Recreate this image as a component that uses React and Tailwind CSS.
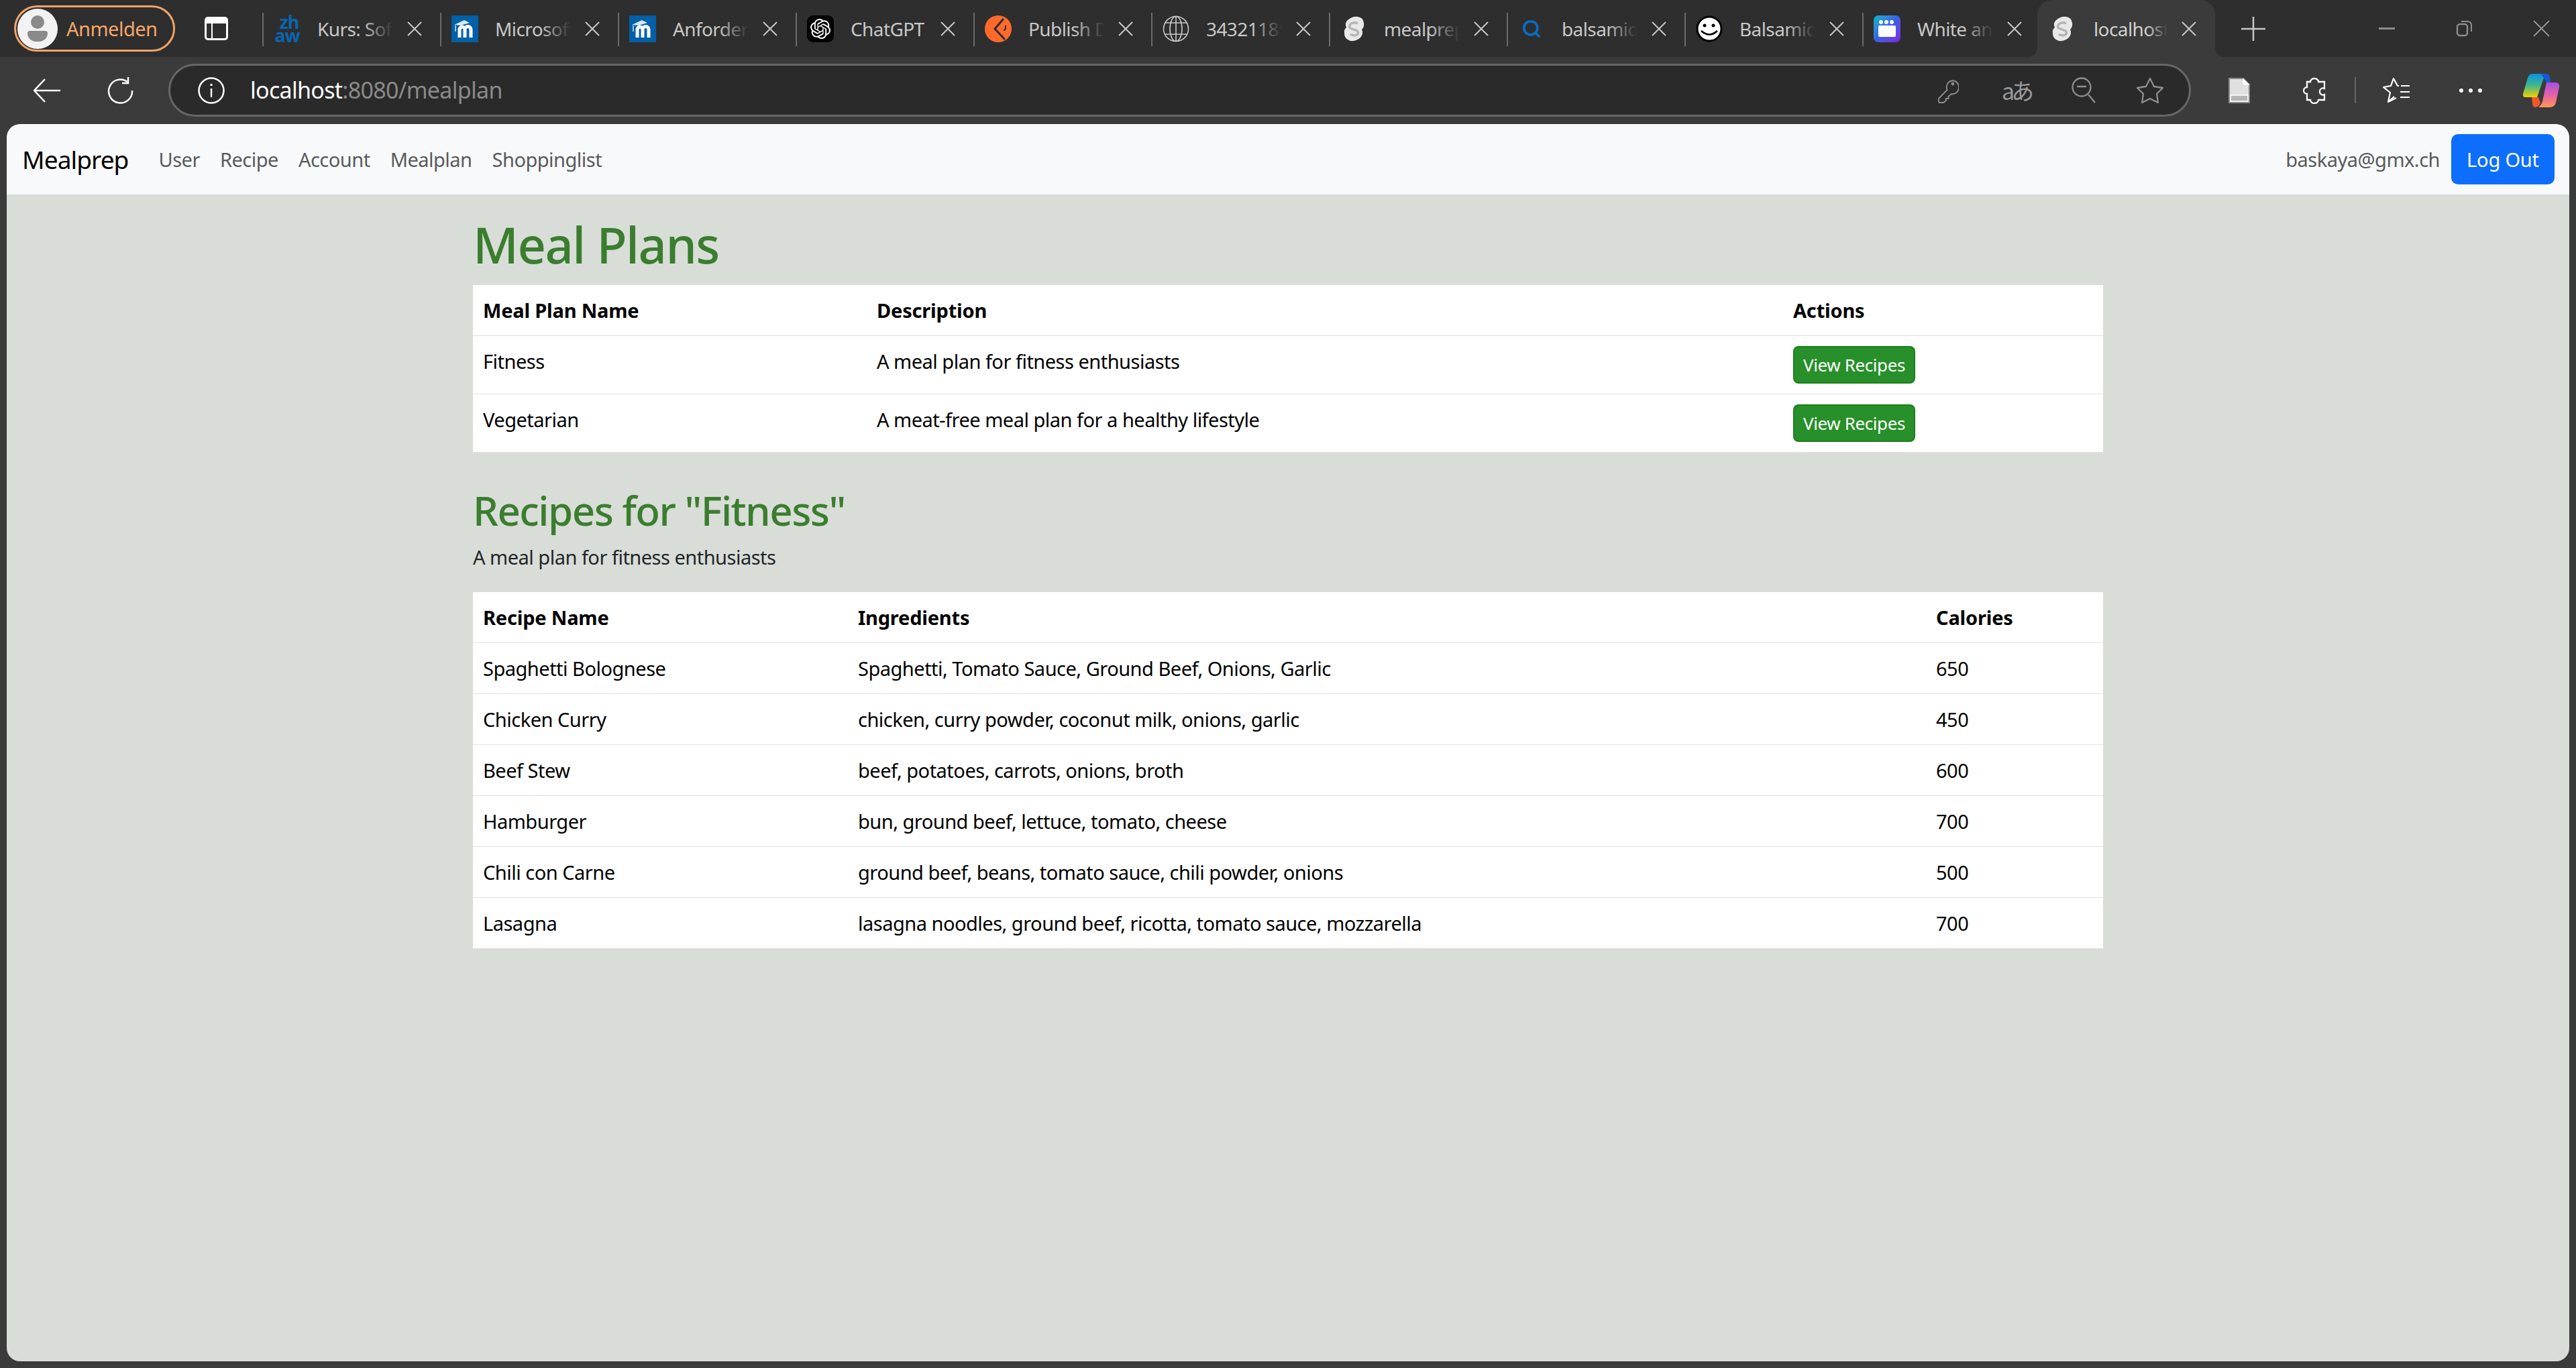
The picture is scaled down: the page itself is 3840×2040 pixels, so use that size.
import { Search } from 'lucide-react'
import { SiOpenai } from 'react-icons/si'

const ZhawIcon = () => (
  <div className="w-[40px] h-[40px] flex flex-col items-center justify-center text-[#0a66ae] font-bold text-[27px] leading-[20px] tracking-[-1px]">
    <span className="pl-[6px]">zh</span>
    <span>aw</span>
  </div>
)

const MoodleIcon = () => (
  <svg width="40" height="40" viewBox="0 0 40 40">
    <rect width="40" height="40" fill="#0060a8" />
    <path d="M4 14 L19 7 L27 11 L14 15 Z" fill="#fff" opacity="0.85" />
    <path d="M12 33 V19 M20 33 V21 a4.5 4.5 0 0 1 9 0 V33 M20 21 a4 4 0 0 0 -8 0" stroke="#fff" strokeWidth="5" fill="none" />
    <path d="M6 15 V24" stroke="#9cc4e4" strokeWidth="2" />
  </svg>
)

const GptIcon = () => (
  <div className="w-[40px] h-[40px] rounded-[9px] bg-black flex items-center justify-center">
    <SiOpenai size={30} color="#fff" />
  </div>
)

const PublishIcon = () => (
  <svg width="40" height="40" viewBox="0 0 40 40">
    <circle cx="20" cy="20" r="20" fill="#ff6a2c" />
    <path d="M28 5 L15 20 L30 36" stroke="#2e2e2e" strokeWidth="3" fill="none" />
    <path d="M31 15 V19 Q31 22 28 22" stroke="#2e2e2e" strokeWidth="2" fill="none" />
  </svg>
)

const GlobeIcon = () => (
  <svg width="40" height="40" viewBox="0 0 40 40" fill="none" stroke="#c8c8c8" strokeWidth="1.6">
    <circle cx="20" cy="20" r="18.5" />
    <ellipse cx="20" cy="20" rx="9" ry="18.5" />
    <path d="M20 1.5 V38.5 M4 11 H36 M4 28 H36" />
  </svg>
)

const SvelteIcon = () => (
  <svg width="40" height="40" viewBox="0 0 40 40">
    <path d="M26 2 Q34 3 35 11 Q36 17 32 21 Q35 27 30 33 Q24 39 15 38 Q6 35 6 27 Q5 21 9 18 Q6 11 11 7 Q18 1 26 2 Z" fill="#e8e8e8" />
    <path d="M26 12 Q20 9 15 13 Q12 17 15 19 L25 23 Q28 26 25 29 Q20 31 15 28" stroke="#b4b4b4" strokeWidth="3.5" fill="none" />
  </svg>
)

const SearchIcon = () => (
  <div className="w-[40px] h-[40px] flex items-center justify-center">
    <Search size={30} strokeWidth={3} color="#0a6cc4" />
  </div>
)

const SmileIcon = () => (
  <svg width="40" height="40" viewBox="0 0 40 40">
    <circle cx="20" cy="20" r="18" fill="#fff" stroke="#000" strokeWidth="3" />
    <circle cx="13" cy="15" r="2.5" fill="#000" />
    <circle cx="26" cy="15" r="2.5" fill="#000" />
    <path d="M8 23 Q20 34 32 23" stroke="#000" strokeWidth="2.5" fill="none" />
  </svg>
)

const WindowIcon = () => (
  <div className="w-[40px] h-[40px] rounded-[7px] bg-linear-to-br from-[#0fb5c9] via-[#3a5fe0] to-[#7a1ee6] flex flex-col px-[7px] pt-[7px]">
    <div className="flex gap-[2px] h-[6px] ml-[1px]">
      <div className="w-[6px] h-[6px] rounded-full bg-white" />
      <div className="w-[6px] h-[6px] rounded-full bg-white" />
      <div className="w-[6px] h-[6px] rounded-full bg-white" />
    </div>
    <div className="mt-[2px] h-[17px] rounded-[2px] bg-white" />
  </div>
)

const tabs = [
  { title: 'Kurs: Software', Icon: ZhawIcon },
  { title: 'Microsoft', Icon: MoodleIcon },
  { title: 'Anforderungen', Icon: MoodleIcon },
  { title: 'ChatGPT', Icon: GptIcon, noFade: true },
  { title: 'Publish Docs', Icon: PublishIcon },
  { title: '34321189', Icon: GlobeIcon },
  { title: 'mealprep', Icon: SvelteIcon },
  { title: 'balsamiq', Icon: SearchIcon },
  { title: 'Balsamiq', Icon: SmileIcon },
  { title: 'White and', Icon: WindowIcon },
]

const CloseX = ({ size = 22, color = '#c8c8c8', width = 2 }) => (
  <svg width={size} height={size} viewBox="0 0 22 22" className="shrink-0">
    <path d="M1 1 L21 21 M21 1 L1 21" stroke={color} strokeWidth={width} fill="none" />
  </svg>
)

const Tab = ({ title, Icon, noFade }) => (
  <div className="relative w-[265px] h-[85px] shrink-0 flex items-center">
    <div className="absolute left-0 top-[19px] w-[2px] h-[50px] bg-[#6b6b6b]" />
    <div className="ml-[17px] shrink-0"><Icon /></div>
    <div className="relative ml-[25px] w-[113px] h-[40px] overflow-hidden whitespace-nowrap text-[28px] leading-[40px] tracking-[-0.6px] text-[#c8c8c8]">
      {title}
      {!noFade && <div className="absolute right-0 top-0 w-[45px] h-[40px] bg-linear-to-r from-transparent to-[#2e2e2e]" />}
    </div>
    <div className="ml-[21px]"><CloseX /></div>
  </div>
)

const ActiveTab = () => (
  <div className="relative w-[265px] h-[85px] shrink-0 flex items-center bg-[#3b3b3b] rounded-t-[22px] -ml-[4px]">
    <div className="absolute -left-[14px] bottom-0 w-[14px] h-[14px] bg-[#3b3b3b]">
      <div className="w-[14px] h-[14px] bg-[#2e2e2e] rounded-br-[14px]" />
    </div>
    <div className="absolute -right-[14px] bottom-0 w-[14px] h-[14px] bg-[#3b3b3b]">
      <div className="w-[14px] h-[14px] bg-[#2e2e2e] rounded-bl-[14px]" />
    </div>
    <div className="ml-[17px] shrink-0"><SvelteIcon /></div>
    <div className="relative ml-[27px] w-[110px] h-[40px] overflow-hidden whitespace-nowrap text-[28px] leading-[40px] tracking-[-0.6px] text-[#d0d0d0]">
      localhost
      <div className="absolute right-0 top-0 w-[30px] h-[40px] bg-linear-to-r from-transparent to-[#3b3b3b]" />
    </div>
    <div className="ml-[21px]"><CloseX /></div>
  </div>
)

const TabStrip = () => (
  <div className="h-[85px] shrink-0 bg-[#2e2e2e] flex items-center">
    <div className="ml-[21px] w-[240px] h-[69px] rounded-[35px] border-[3px] border-[#f0a468] flex items-center pl-[2px]">
      <div className="w-[60px] h-[60px] rounded-full bg-[#f2f2f2] flex flex-col items-center justify-center shrink-0">
        <div className="w-[20px] h-[20px] rounded-full bg-[#8a8a8a]" />
        <div className="mt-[3px] w-[30px] h-[16px] rounded-b-[14px] rounded-t-[4px] bg-[#8a8a8a]" />
      </div>
      <span className="ml-[13px] text-[29px] tracking-[-0.5px] text-[#f5a76b]">Anmelden</span>
    </div>
    <div className="ml-[44px] w-[35px] h-[35px] rounded-[5px] border-[3px] border-white flex flex-col mr-[51px]">
      <div className="h-[7px] bg-white shrink-0" />
      <div className="ml-[7px] flex-1 w-[2px] bg-white" />
    </div>
    {tabs.map((tab) => <Tab key={tab.title} {...tab} />)}
    <ActiveTab />
    <svg width="36" height="36" viewBox="0 0 36 36" className="ml-[39px]">
      <path d="M18 0 V36 M0 18 H36" stroke="#c8c8c8" strokeWidth="2.5" fill="none" />
    </svg>
    <div className="ml-[169px] w-[24px] h-[3px] bg-[#8d8d8d]" />
    <svg width="25" height="25" viewBox="0 0 25 25" className="ml-[91px]">
      <rect x="2" y="6" width="15" height="17" rx="4" stroke="#8d8d8d" strokeWidth="2.5" fill="none" />
      <path d="M8 2 H17 Q23 2 23 8 V17" stroke="#8d8d8d" strokeWidth="2" fill="none" />
    </svg>
    <div className="ml-[90px]"><CloseX size={25} color="#9a9a9a" width={1.8} /></div>
  </div>
)

const Toolbar = () => (
  <div className="h-[100px] shrink-0 bg-[#3b3b3b] flex items-center pb-[1px]">
    <svg width="40" height="36" viewBox="0 0 40 36" className="ml-[50px]">
      <path d="M40 18 H2 M17 1 L1 18 L17 35" stroke="#fff" strokeWidth="2.5" fill="none" />
    </svg>
    <svg width="40" height="40" viewBox="0 0 40 40" className="ml-[70px]">
      <path d="M30 7 A17.5 17.5 0 1 0 37 20" stroke="#fff" strokeWidth="2.5" fill="none" />
      <path d="M31 0 V9 H22" stroke="#fff" strokeWidth="2.5" fill="none" />
    </svg>
    <div className="ml-[51px] w-[3015px] h-[79px] rounded-[40px] bg-[#2a2a2a] border-[3px] border-[#666666] flex items-center">
      <svg width="40" height="40" viewBox="0 0 40 40" className="ml-[41px]">
        <circle cx="20" cy="20" r="18.5" stroke="#fff" strokeWidth="2.5" fill="none" />
        <path d="M20 17 V30" stroke="#fff" strokeWidth="2.5" />
        <circle cx="20" cy="11.5" r="1.8" fill="#fff" />
      </svg>
      <span className="ml-[38px] text-[34px] tracking-[-0.7px] text-white whitespace-nowrap">
        localhost<span className="text-[#8a8a8a]">:8080/mealplan</span>
      </span>
      <div className="flex-1" />
      <svg width="31" height="38" viewBox="0 0 34 38" preserveAspectRatio="none" fill="none" stroke="#8f8f8f" strokeWidth="2">
        <path d="M14 15 a10 10 0 1 1 8 9 L17 28 V31 H13 V34 L9 37 H3 Q1 37 1 35 V31 L15 18 Z" />
        <circle cx="24" cy="9" r="1.5" fill="#8f8f8f" />
      </svg>
      <div className="ml-[64px] w-[43px] h-[40px] whitespace-nowrap text-[34px] leading-[40px] tracking-[-5px] text-[#9a9a9a] font-['Noto_Sans_CJK_JP',sans-serif]">aあ</div>
      <svg width="36" height="40" viewBox="0 0 36 40" fill="none" stroke="#8f8f8f" strokeWidth="2.3" className="ml-[61px]">
        <circle cx="15" cy="15" r="13.5" />
        <path d="M8 14 H22 M25 26 L35 38" />
      </svg>
      <svg width="42" height="40" viewBox="0 0 42 40" fill="none" stroke="#8f8f8f" strokeWidth="2.3" strokeLinejoin="round" className="ml-[60px]">
        <path d="M21 2 L27 14 L40 16 L31 25 L33 38 L21 32 L9 38 L11 25 L2 16 L15 14 Z" />
      </svg>
      <div className="w-[37px]" />
    </div>
    <svg width="34" height="40" viewBox="0 0 34 40" className="ml-[55px]">
      <path d="M2 2 H23 L32 11 V38 H2 Z" fill="#e0e0e0" stroke="#8a8a8a" strokeWidth="2" />
      <rect x="4" y="27" width="26" height="9" fill="#b5b5b5" stroke="#fff" strokeWidth="1.5" />
      <path d="M23 2 V11 H32" fill="#fff" stroke="#fff" strokeWidth="1" />
    </svg>
    <svg width="36" height="40" viewBox="0 0 36 40" fill="none" stroke="#fff" strokeWidth="2.3" className="ml-[77px]">
      <path d="M7 7 h5 a6 5 0 1 1 12 0 h9 v10 a5 5 0 1 0 0 9 v8 h-9 a6 5 0 1 1 -12 0 h-5 v-9 a5 5 0 1 1 0 -10 z" />
    </svg>
    <div className="ml-[42px] w-[2px] h-[39px] bg-[#666666]" />
    <svg width="40" height="40" viewBox="0 0 40 40" fill="none" stroke="#fff" strokeWidth="2.2" strokeLinejoin="round" className="ml-[40px]">
      <path d="M17 29 L8 37 L11 23 L1 15 L12 13 L16 2 L22 13 H24 M20 31 L8 37" />
      <path d="M27 13 H40 M26 22 H40 M26 30 H40" />
    </svg>
    <div className="ml-[74px] flex gap-[8px]">
      <div className="w-[6px] h-[6px] rounded-full bg-white" />
      <div className="w-[6px] h-[6px] rounded-full bg-white" />
      <div className="w-[6px] h-[6px] rounded-full bg-white" />
    </div>
    <svg width="56" height="52" viewBox="0 0 56 52" className="ml-[60px]">
      <defs>
        <linearGradient id="copilotLeft" x1="0" y1="0" x2="0" y2="1">
          <stop offset="0" stopColor="#0b8fe8" />
          <stop offset="0.5" stopColor="#3fb88a" />
          <stop offset="1" stopColor="#f5d000" />
        </linearGradient>
        <linearGradient id="copilotRight" x1="0" y1="0" x2="0" y2="1">
          <stop offset="0" stopColor="#a84fe0" />
          <stop offset="0.6" stopColor="#f0689a" />
          <stop offset="1" stopColor="#fb9a50" />
        </linearGradient>
      </defs>
      <path d="M15 1 H37 Q34 2 31 10 L22 36 H5 Q0 36 1 31 L8 7 Q10 1 15 1 Z" fill="url(#copilotLeft)" />
      <path d="M28 1 H37 Q42 3 42 14 H36 Z" fill="#1558d6" />
      <path d="M36 14 H49 Q56 14 55 21 L50 44 Q48 51 41 51 H24 Q28 48 30 42 Z" fill="url(#copilotRight)" />
      <path d="M14 36 H24 L27 44 Q25 51 19 51 Q16 51 15 46 Z" fill="#f0562c" />
    </svg>
  </div>
)

const Navbar = () => (
  <nav className="h-[105px] shrink-0 bg-[#f8f9fa] rounded-t-[20px] flex items-center pl-[23px] pr-[22px]">
    <span className="text-[37px] tracking-[-0.9px] text-black">Mealprep</span>
    <div className="ml-[45px] flex gap-[30px] text-[29px] tracking-[-0.5px] text-[#595a5c]">
      <span>User</span>
      <span>Recipe</span>
      <span>Account</span>
      <span>Mealplan</span>
      <span>Shoppinglist</span>
    </div>
    <div className="flex-1" />
    <span className="text-[29px] tracking-[-0.5px] text-[#595a5c]">baskaya@gmx.ch</span>
    <button className="ml-[17px] w-[154px] h-[75px] rounded-[10px] bg-[#0d6efd] text-white text-[29px] tracking-[-0.2px]">Log Out</button>
  </nav>
)

const thClass = 'py-[15px] px-[15px] text-left font-bold leading-[45px] tracking-[-0.2px] border-b border-[#dee2e6]'
const tdClass = 'py-[15px] px-[15px] align-top leading-[45px] border-b border-[#dee2e6]'

const mealPlans = [
  { name: 'Fitness', description: 'A meal plan for fitness enthusiasts' },
  { name: 'Vegetarian', description: 'A meat-free meal plan for a healthy lifestyle' },
]

const recipes = [
  { name: 'Spaghetti Bolognese', ingredients: 'Spaghetti, Tomato Sauce, Ground Beef, Onions, Garlic', calories: 650 },
  { name: 'Chicken Curry', ingredients: 'chicken, curry powder, coconut milk, onions, garlic', calories: 450 },
  { name: 'Beef Stew', ingredients: 'beef, potatoes, carrots, onions, broth', calories: 600 },
  { name: 'Hamburger', ingredients: 'bun, ground beef, lettuce, tomato, cheese', calories: 700 },
  { name: 'Chili con Carne', ingredients: 'ground beef, beans, tomato sauce, chili powder, onions', calories: 500 },
  { name: 'Lasagna', ingredients: 'lasagna noodles, ground beef, ricotta, tomato sauce, mozzarella', calories: 700 },
]

const MealPlanTable = () => (
  <table className="w-full table-fixed border-collapse bg-white text-[29px] tracking-[-0.5px] text-black">
    <colgroup>
      <col className="w-[587px]" />
      <col className="w-[1366px]" />
      <col className="w-[477px]" />
    </colgroup>
    <thead>
      <tr>
        <th className={thClass}>Meal Plan Name</th>
        <th className={thClass}>Description</th>
        <th className={thClass}>Actions</th>
      </tr>
    </thead>
    <tbody>
      {mealPlans.map((plan) => (
        <tr key={plan.name}>
          <td className={tdClass}>{plan.name}</td>
          <td className={tdClass}>{plan.description}</td>
          <td className={tdClass}>
            <button className="block w-[182px] h-[56px] rounded-[8px] bg-[#28902a] border-[2px] border-[#198019] text-white text-[26px] tracking-[-0.4px]">
              View Recipes
            </button>
          </td>
        </tr>
      ))}
    </tbody>
  </table>
)

const RecipeTable = () => (
  <table className="w-full table-fixed border-collapse bg-white text-[29px] tracking-[-0.5px] text-black">
    <colgroup>
      <col className="w-[559px]" />
      <col className="w-[1607px]" />
      <col className="w-[264px]" />
    </colgroup>
    <thead>
      <tr>
        <th className={thClass}>Recipe Name</th>
        <th className={thClass}>Ingredients</th>
        <th className={thClass}>Calories</th>
      </tr>
    </thead>
    <tbody>
      {recipes.map((recipe) => (
        <tr key={recipe.name}>
          <td className={tdClass}>{recipe.name}</td>
          <td className={tdClass}>{recipe.ingredients}</td>
          <td className={tdClass}>{recipe.calories}</td>
        </tr>
      ))}
    </tbody>
  </table>
)

export default function App() {
  return (
    <div className="w-[3840px] h-[2040px] flex flex-col overflow-hidden bg-[#3b3b3b] font-['Noto_Sans',sans-serif]">
      <TabStrip />
      <Toolbar />
      <div className="flex-1 mx-[10px] mb-[10px] flex flex-col rounded-[20px] bg-[#d8ddd7] overflow-hidden">
        <Navbar />
        <main className="w-[2430px] mx-auto pt-[30px]">
          <h1 className="text-[74px] leading-[90px] mb-[15px] font-medium tracking-[-1.5px] text-[#3b7d2f]">Meal Plans</h1>
          <MealPlanTable />
          <h2 className="mt-[50px] mb-[11px] text-[60px] leading-[72px] font-medium tracking-[-1.5px] text-[#3b7d2f]">Recipes for "Fitness"</h2>
          <p className="mb-[30px] text-[29px] leading-[45px] tracking-[-0.5px] text-[#212529]">A meal plan for fitness enthusiasts</p>
          <RecipeTable />
        </main>
      </div>
    </div>
  )
}
